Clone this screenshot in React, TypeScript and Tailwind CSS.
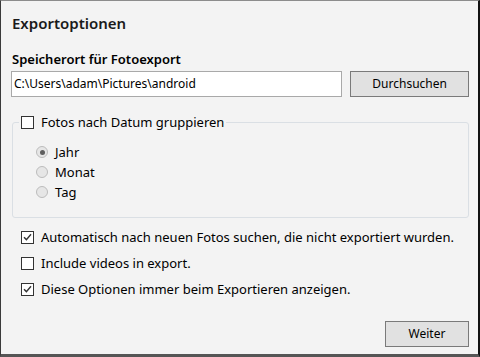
function CheckBox({ checked }: { checked?: boolean }) {
  return (
    <span className="flex h-[13px] w-[13px] shrink-0 items-center justify-center border border-[#333333] bg-white">
      {checked && (
        <svg width="9" height="8" viewBox="0 0 9 8">
          <path d="M1 4.2 L3.4 6.6 L8 1.2" fill="none" stroke="#333333" strokeWidth="1.4" />
        </svg>
      )}
    </span>
  );
}

function Radio({ checked, label }: { checked?: boolean; label: string }) {
  return (
    <div className="flex h-[20px] items-center gap-[7px]">
      <span className="flex h-[12px] w-[12px] shrink-0 items-center justify-center rounded-full border border-[#bcbcbc] bg-[#e6e6e6]">
        {checked && <span className="h-[5px] w-[5px] rounded-full bg-[#5f5f5f]" />}
      </span>
      <span className="text-[13px] leading-[20px] text-black">{label}</span>
    </div>
  );
}

function CheckRow({ checked, label }: { checked?: boolean; label: string }) {
  return (
    <div className="flex h-[26px] items-center gap-[7px] pl-[9px]">
      <CheckBox checked={checked} />
      <span className="text-[13px] leading-[18px] text-black">{label}</span>
    </div>
  );
}

export default function App() {
  return (
    <div className="flex h-[357px] w-[480px] flex-col border-t border-l border-r-2 border-b-[3px] border-t-[#8c8c8c] border-l-[#3a3a3a] border-r-[#111111] border-b-[#555555] bg-[#f3f3f3] pl-[11px] pr-[9px] font-['Noto_Sans',sans-serif] text-black">
      <div className="mt-[12px] text-[15px] font-semibold leading-[20px] text-[#1a1a1a]">Exportoptionen</div>

      <div className="mt-[17px] text-[13px] font-semibold leading-[18px]">Speicherort für Fotoexport</div>

      <div className="mt-[3px] flex h-[26px] gap-[8px]">
        <div className="-ml-px flex w-[332px] items-center border border-[#a9a9a9] bg-white pl-[2px] text-[12px]">
          C:\Users\adam\Pictures\android
        </div>
        <button className="w-[119px] border border-[#7a7a7a] bg-[#e1e1e1] text-[12px] text-black">Durchsuchen</button>
      </div>

      <fieldset className="mt-[16px] rounded-[3px] border border-[#dadfe4] pb-[15px]">
        <legend className="ml-[6px] px-[2px]">
          <span className="flex h-[18px] items-center gap-[7px]">
            <CheckBox />
            <span className="text-[13px] leading-[18px]">Fotos nach Datum gruppieren</span>
          </span>
        </legend>
        <div className="mt-[11px] flex flex-col pl-[23px]">
          <Radio checked label="Jahr" />
          <Radio label="Monat" />
          <Radio label="Tag" />
        </div>
      </fieldset>

      <div className="mt-[6px] flex flex-col">
        <CheckRow checked label="Automatisch nach neuen Fotos suchen, die nicht exportiert wurden." />
        <CheckRow label="Include videos in export." />
        <CheckRow checked label="Diese Optionen immer beim Exportieren anzeigen." />
      </div>

      <div className="mt-[19px] flex justify-end">
        <button className="h-[26px] w-[84px] border border-[#7a7a7a] bg-[#e1e1e1] text-[12px] text-black">Weiter</button>
      </div>
    </div>
  );
}
